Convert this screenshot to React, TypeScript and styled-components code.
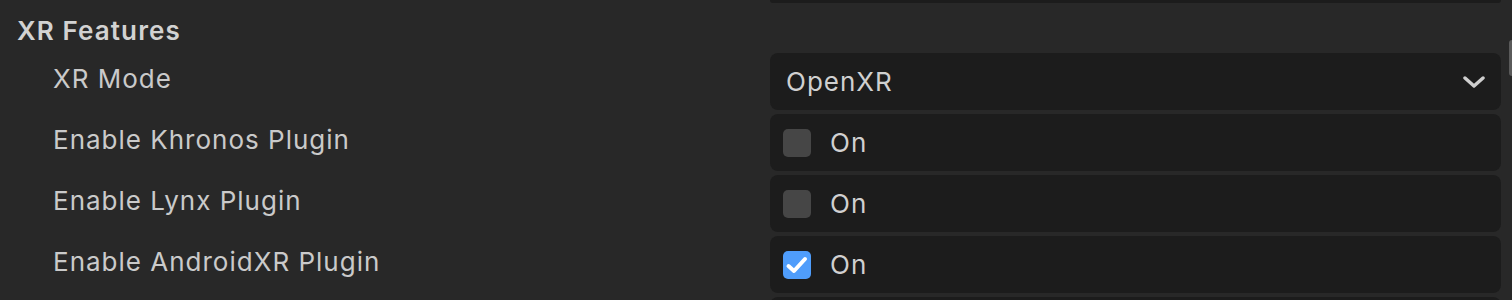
import React from "react";
import styled, { createGlobalStyle } from "styled-components";

const Global = createGlobalStyle`
  html, body { margin: 0; padding: 0; background: #282828; }
  body { font-family: Inter, "Noto Sans", sans-serif; -webkit-font-smoothing: antialiased; }
`;

const Panel = styled.div`
  position: relative;
  width: 1512px;
  height: 300px;
  overflow: hidden;
  background: #282828;
  color: #cccccc;
`;

const Stub = styled.div`
  margin-left: 770px;
  width: 731px;
  height: 3px;
  background: #1c1c1c;
  border-radius: 0 0 8px 8px;
`;

const Header = styled.div`
  height: 50px;
  box-sizing: border-box;
  padding: 13px 0 0 17px;
  font-size: 26px;
  font-weight: 600;
  letter-spacing: 1.1px;
  line-height: 30px;
  color: #d2d2d2;
`;

const Rows = styled.div`
  display: flex;
  flex-direction: column;
  gap: 4px;
`;

const Row = styled.div`
  display: grid;
  grid-template-columns: 770px 731px;
  height: 57px;
  align-items: center;
`;

const Label = styled.div`
  padding: 0 0 5px 53px;
  font-size: 26px;
  letter-spacing: 1px;
  line-height: 30px;
  color: #cacaca;
`;

const Field = styled.div`
  height: 57px;
  box-sizing: border-box;
  background: #1c1c1c;
  border-radius: 8px;
  display: flex;
  align-items: center;
  padding: 0 16px 0 13px;
  font-size: 26px;
  letter-spacing: 1px;
  color: #d0d0d0;
`;

const Value = styled.span`
  flex: 1;
  padding-left: 3px;
  line-height: 30px;
`;

const Box = styled.span<{ $on?: boolean }>`
  width: 28px;
  height: 28px;
  border-radius: 5px;
  background: ${(p) => (p.$on ? "#4f9dfb" : "#464646")};
  display: flex;
  align-items: center;
  justify-content: center;
  margin-right: 19px;
`;

const OnText = styled.span`
  line-height: 30px;
`;

const Scroll = styled.div`
  position: absolute;
  left: 1509px;
  top: 40px;
  width: 6px;
  height: 36px;
  border-radius: 3px;
  background: #5a5a5a;
`;

const Chevron = () => (
  <svg width="22" height="14" viewBox="0 0 22 14">
    <path d="M2 3 L11 11 L20 3" fill="none" stroke="#cfcfcf" strokeWidth="3.4" strokeLinecap="round" strokeLinejoin="round" />
  </svg>
);

const Check = () => (
  <svg width="24" height="22" viewBox="0 0 24 22">
    <path d="M3.5 12 L9 17 L20 5" fill="none" stroke="#ffffff" strokeWidth="4" strokeLinecap="round" strokeLinejoin="round" />
  </svg>
);

const toggles = [
  { label: "Enable Khronos Plugin", on: false },
  { label: "Enable Lynx Plugin", on: false },
  { label: "Enable AndroidXR Plugin", on: true },
];

export default function App() {
  return (
    <Panel>
      <Global />
      <Stub />
      <Header>XR Features</Header>
      <Rows>
        <Row>
          <Label>XR Mode</Label>
          <Field>
            <Value>OpenXR</Value>
            <Chevron />
          </Field>
        </Row>
        {toggles.map((t) => (
          <Row key={t.label}>
            <Label>{t.label}</Label>
            <Field>
              <Box $on={t.on}>{t.on && <Check />}</Box>
              <OnText>On</OnText>
            </Field>
          </Row>
        ))}
        <Row>
          <Label />
          <Field />
        </Row>
      </Rows>
      <Scroll />
    </Panel>
  );
}
